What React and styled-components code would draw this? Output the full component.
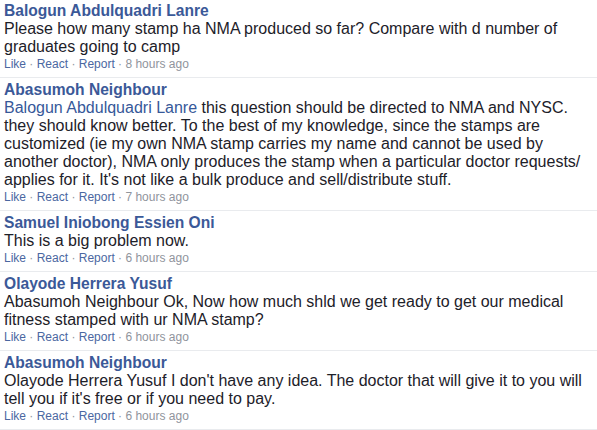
import React from "react";
import styled, { createGlobalStyle } from "styled-components";

const Global = createGlobalStyle`
  html, body { margin: 0; padding: 0; background: #fff; }
  body { font-family: "Liberation Sans", Arial, Helvetica, sans-serif; }
`;

const List = styled.div`
  width: 597px;
  box-sizing: border-box;
  margin-top: -1px;
`;

const Row = styled.div`
  padding: 3px 5px 5px 4px;
  border-bottom: 1px solid #e9ebee;
`;

const Name = styled.a`
  display: block;
  font-size: 15.6px;
  line-height: 18px;
  font-weight: bold;
  color: #3b5998;
  text-decoration: none;
`;

const Body = styled.div`
  font-size: 16px;
  line-height: 18px;
  color: #1d2129;
`;

const Mention = styled.span`
  color: #365899;
`;

const Actions = styled.div`
  font-size: 12px;
  line-height: 16px;
  color: #90949c;
`;

const ActionLink = styled.a`
  color: #4b67a1;
  text-decoration: none;
`;

const comments = [
  {
    name: "Balogun Abdulquadri Lanre",
    text: "Please how many stamp ha NMA produced so far? Compare with d number of graduates going to camp",
    time: "8 hours ago",
  },
  {
    name: "Abasumoh Neighbour",
    mention: "Balogun Abdulquadri Lanre",
    text: " this question should be directed to NMA and NYSC. they should know better. To the best of my knowledge, since the stamps are customized (ie my own NMA stamp carries my name and cannot be used by another doctor), NMA only produces the stamp when a particular doctor requests/ applies for it. It's not like a bulk produce and sell/distribute stuff.",
    time: "7 hours ago",
  },
  {
    name: "Samuel Iniobong Essien Oni",
    text: "This is a big problem now.",
    time: "6 hours ago",
  },
  {
    name: "Olayode Herrera Yusuf",
    text: "Abasumoh Neighbour Ok, Now how much shld we get ready to get our medical fitness stamped with ur NMA stamp?",
    time: "6 hours ago",
  },
  {
    name: "Abasumoh Neighbour",
    text: "Olayode Herrera Yusuf I don't have any idea. The doctor that will give it to you will tell you if it's free or if you need to pay.",
    time: "6 hours ago",
  },
];

export default function App() {
  return (
    <>
      <Global />
      <List>
        {comments.map((c, i) => (
          <Row key={i}>
            <Name href="#">{c.name}</Name>
            <Body>
              {c.mention && <Mention>{c.mention}</Mention>}
              {c.text}
            </Body>
            <Actions>
              <ActionLink href="#">Like</ActionLink> · <ActionLink href="#">React</ActionLink> ·{" "}
              <ActionLink href="#">Report</ActionLink> · {c.time}
            </Actions>
          </Row>
        ))}
      </List>
    </>
  );
}
